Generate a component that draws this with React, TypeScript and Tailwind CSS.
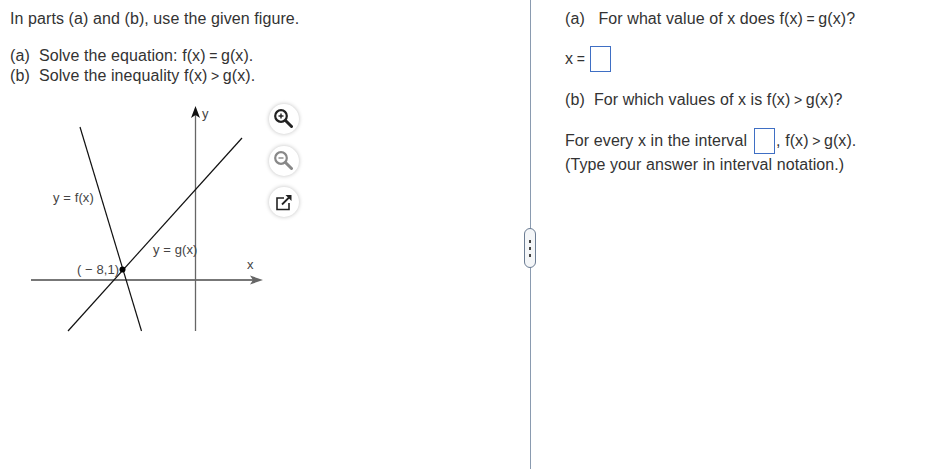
export default function App() {
  return (
    <div className="flex h-[469px] w-[937px] overflow-hidden bg-white font-['Liberation_Sans',Arial,sans-serif] text-[16px] leading-[20px] tracking-[0.09px] text-[#333333]">
      <LeftPanel />
      <Divider />
      <RightPanel />
    </div>
  )
}

function Rel({ children }: { children: React.ReactNode }) {
  return <span className="mx-[-1px] text-[14px]">{children}</span>
}

function LeftPanel() {
  return (
    <div className="w-[530px] shrink-0 pl-[10px] pt-[9px]">
      <p>In parts (a) and (b), use the given figure.</p>
      <p className="mt-[17px]">(a)&nbsp; Solve the equation: f(x) <Rel>=</Rel> g(x).</p>
      <p>(b)&nbsp; Solve the inequality f(x) <Rel>&gt;</Rel> g(x).</p>
      <div className="mt-[18px] flex">
        <Figure />
        <div className="ml-[9px] flex flex-col gap-[11.5px]">
          <ToolButton><ZoomIcon plus /></ToolButton>
          <ToolButton><ZoomIcon /></ToolButton>
          <ToolButton><OpenIcon /></ToolButton>
        </div>
      </div>
    </div>
  )
}

function Figure() {
  return (
    <svg width="250" height="232" viewBox="10 104 250 232" className="shrink-0 overflow-visible">
      <line x1="31" y1="280" x2="254" y2="280" stroke="#777777" strokeWidth="2" />
      <polygon points="263,280 250,275.5 253,280 250,284.5" fill="#666666" />
      <line x1="195.5" y1="114" x2="195.5" y2="331" stroke="#666666" strokeWidth="1.3" />
      <polygon points="195.5,106 191,118 195.5,115 200,118" fill="#111111" />
      <line x1="80" y1="127" x2="141.5" y2="331" stroke="#111111" strokeWidth="1.2" />
      <line x1="68" y1="331" x2="242" y2="138" stroke="#111111" strokeWidth="1.2" />
      <circle cx="122.5" cy="269.5" r="3" fill="#000000" />
      <g fill="#444444" fontSize="13">
        <text x="202" y="118">y</text>
        <text x="53" y="202">y = f(x)</text>
        <text x="153" y="254">y = g(x)</text>
        <text x="77" y="274">( − 8,1)</text>
        <text x="247" y="269">x</text>
      </g>
    </svg>
  )
}

function ToolButton({ children }: { children: React.ReactNode }) {
  return (
    <button className="flex h-[30px] w-[30px] items-center justify-center rounded-full bg-white shadow-[0_0_4px_rgba(0,0,0,0.25)]">
      {children}
    </button>
  )
}

function ZoomIcon({ plus }: { plus?: boolean }) {
  const color = plus ? '#222222' : '#888888'
  return (
    <svg width="20" height="20" viewBox="0 0 20 20" fill="none" stroke={color} className="-translate-x-px -translate-y-px">
      <circle cx="8" cy="8" r="5.8" strokeWidth="2.2" />
      <line x1="12.5" y1="12.5" x2="18.5" y2="18.5" strokeWidth="3" strokeLinecap="round" />
      <line x1="5.5" y1="8" x2="10.5" y2="8" strokeWidth="1.4" />
      {plus && <line x1="8" y1="5.5" x2="8" y2="10.5" strokeWidth="1.4" />}
    </svg>
  )
}

function OpenIcon() {
  return (
    <svg width="18" height="18" viewBox="0 0 18 18" fill="none" stroke="#222222">
      <path d="M9 5H2V16.5H14V10" strokeWidth="1.6" />
      <path d="M7 11.5L14 4.5" strokeWidth="1.8" />
      <polygon points="10.5,2 16.5,2 16.5,8" fill="#222222" stroke="none" />
    </svg>
  )
}

function Divider() {
  return (
    <div className="relative w-px shrink-0 bg-[#8a9bb0]">
      <div className="absolute left-[-6px] top-[228px] flex h-[40px] w-[12px] flex-col items-center justify-center gap-[4px] rounded-[6px] border border-[#6b7c93] bg-[#f4f6f8]">
        <span className="h-[3px] w-[2px] bg-[#444444]" />
        <span className="h-[3px] w-[2px] bg-[#444444]" />
        <span className="h-[3px] w-[2px] bg-[#444444]" />
      </div>
    </div>
  )
}

function AnswerBox({ className }: { className: string }) {
  return <span className={`inline-block h-[26px] w-[21px] border border-[#3f6fc4] bg-white align-middle ${className}`} />
}

function RightPanel() {
  return (
    <div className="flex-1 pl-[34px] pt-[9px]">
      <p>(a)&nbsp;&nbsp; For what value of x does f(x) <Rel>=</Rel> g(x)?</p>
      <p className="mt-[17px] flex h-[26px] items-center">
        <span className="whitespace-pre">x <Rel>=</Rel></span>
        <AnswerBox className="ml-[6px]" />
      </p>
      <p className="mt-[18px]">(b)&nbsp; For which values of x is f(x) <Rel>&gt;</Rel> g(x)?</p>
      <p className="mt-[18px] flex h-[26px] items-center">
        <span>For every x in the interval</span>
        <AnswerBox className="ml-[7px] mr-[1px]" />
        <span className="whitespace-pre">, f(x) <Rel>&gt;</Rel> g(x).</span>
      </p>
      <p className="mt-[1px]">(Type your answer in interval notation.)</p>
    </div>
  )
}
